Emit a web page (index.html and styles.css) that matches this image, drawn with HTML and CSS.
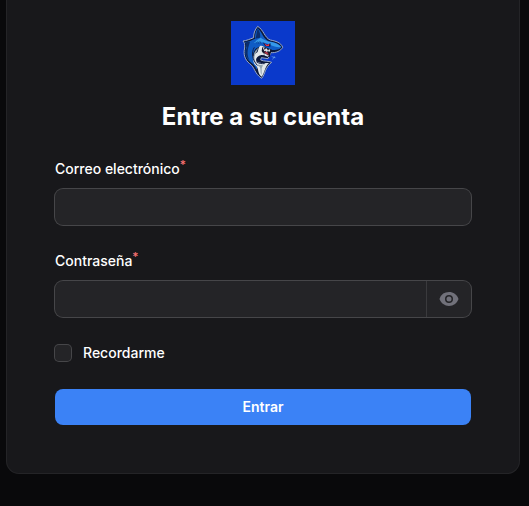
FILE: index.html
```html
<!DOCTYPE html>
<html lang="es">
<head>
<meta charset="utf-8">
<meta name="viewport" content="width=device-width, initial-scale=1">
<title>Entre a su cuenta</title>
<link rel="stylesheet" href="styles.css">
</head>
<body>
<main class="card">
  <header class="header">
    <svg class="logo" viewBox="12 12 192 192" aria-hidden="true">
      <path fill="#0a39cb" d="M12 12h192v192H12z"/>
      <path fill="#0a173a" stroke="#9aaacb" stroke-width="3" stroke-linejoin="round" d="M92 28C83 38 79 52 80 62C69 66 59 71 48 72C54 79 53 85 53 93C48 112 54 129 68 140C84 151 81 169 104 184C115 171 113 152 134 136C124 131 112 134 101 129L103 122L123 125L132 107C147 108 161 102 167 91C162 76 145 72 130 69C113 63 110 38 92 28Z"/>
      <path fill="#105cc5" d="M92 34C86 43 83 55 84 65C76 69 64 75 53 75C58 80 60 84 58 91C52 107 56 124 70 135C80 143 86 148 88 158L93 148C80 137 74 117 81 103C85 94 95 88 108 88L136 99C149 100 161 96 163 90C157 81 143 76 128 73C108 68 107 47 92 34Z"/>
      <path fill="#0a2d6d" d="M92 35C88 46 89 55 85 65L99 62C101 50 97 41 92 35ZM55 76L69 74L64 91C60 106 61 119 68 131C53 118 54 102 60 91Z"/>
      <path fill="#3599e9" d="M101 62C110 68 122 74 136 76C148 79 158 84 162 90C151 92 140 88 129 83C117 77 106 74 91 76L80 78L90 69Z"/>
      <path fill="#e2e8eb" d="M99 87C104 84 110 88 115 92L107 93L109 105L116 115L103 114C93 116 87 122 87 130C91 139 106 139 126 138C113 150 113 168 104 179C91 170 96 154 87 146C76 139 76 117 86 109C97 105 91 94 99 87Z"/>
      <path fill="#91a3b1" d="M94 92L89 105C82 114 80 124 86 136C92 144 99 144 108 145L104 154L104 174C98 166 103 156 98 149L89 144L95 144C76 133 77 110 87 99Z"/>
      <path fill="none" stroke="#12204a" stroke-width="3" d="M82 91C72 107 76 129 91 145M88 134C97 141 106 140 113 140"/>
      <path fill="#11152a" d="M106 90L133 98L128 121L112 114L104 102Z"/>
      <path fill="#a83345" d="M112 105C118 101 124 106 125 114L116 111Z"/>
      <path fill="#e4e9ee" d="M107 91L111 92L113 99L117 94L120 95L123 101L126 97L130 98L127 105L123 102L119 105L116 101L112 103ZM108 107L111 108L114 112L117 110L120 115L125 114L123 119L114 116Z"/>
      <path fill="#081c50" d="M107 76L119 83L131 79L130 89L115 88Z"/>
      <path fill="#f32b35" d="M112 79L120 84L127 80L126 87L117 87Z"/>
      <path fill="none" stroke="#0a3f87" stroke-width="2" d="M86 75l5 5m1-7l4 8m2-9l4 8"/>
      <path fill="none" stroke="#8fc8f4" stroke-width="2" d="M135 118l3 3m4-3l-3 3l6 1m-6 2l-2 3"/>
    </svg>
    <h1 class="title">Entre a su cuenta</h1>
  </header>
  <form class="form">
    <div class="field">
      <label class="label" for="email">Correo electrónico<sup class="required">*</sup></label>
      <div class="control"><input class="input" id="email" type="email" required></div>
    </div>
    <div class="field">
      <label class="label" for="password">Contraseña<sup class="required">*</sup></label>
      <div class="control">
        <input class="input" id="password" type="password" required>
        <button class="reveal" type="button" aria-label="Mostrar contraseña">
          <svg class="eye" viewBox="0 0 20 20" aria-hidden="true">
            <path d="M10 12.5a2.5 2.5 0 1 0 0-5 2.5 2.5 0 0 0 0 5Z"/>
            <path fill-rule="evenodd" d="M.664 10.59a1.651 1.651 0 0 1 0-1.186A10.004 10.004 0 0 1 10 3c4.257 0 7.893 2.66 9.336 6.41.147.381.146.804 0 1.186A10.004 10.004 0 0 1 10 17c-4.257 0-7.893-2.66-9.336-6.41ZM14 10a4 4 0 1 1-8 0 4 4 0 0 1 8 0Z" clip-rule="evenodd"/>
          </svg>
        </button>
      </div>
    </div>
    <label class="remember"><input class="checkbox" type="checkbox">Recordarme</label>
    <button class="submit" type="submit">Entrar</button>
  </form>
</main>
</body>
</html>
```
FILE: styles.css
```css
* {
  box-sizing: border-box;
}

body {
  margin: 0;
  padding: 0 10px 32px 7px;
  background: #09090b;
  color: #fff;
  font-family: Inter, "Liberation Sans", sans-serif;
  font-size: 14px;
  line-height: 24px;
}

.card {
  max-width: 512px;
  margin: 0 auto;
  padding: 21px 48px 48px;
  border-radius: 0 0 12px 12px;
  background: #18181b;
  box-shadow: 0 0 0 1px #242427;
}

.header {
  display: flex;
  flex-direction: column;
  align-items: center;
  gap: 16px;
  margin-bottom: 24px;
}

.logo {
  width: 64px;
  height: 64px;
}

.title {
  margin: 0;
  font-size: 24px;
  font-weight: 700;
  line-height: 32px;
}

.form {
  display: grid;
  gap: 24px;
}

.field {
  display: grid;
  gap: 8px;
}

.label,
.remember {
  font-weight: 500;
}

.label {
  justify-self: start;
}

.required {
  color: #f87171;
  font-size: 12px;
  line-height: 0;
  vertical-align: 5px;
}

.control {
  display: flex;
  height: 36px;
  border-radius: 8px;
  background: #242427;
  box-shadow: 0 0 0 1px #464649;
}

.input {
  flex: 1;
  min-width: 0;
  padding: 6px 12px;
  border: 0;
  outline: 0;
  background: transparent;
  color: #fff;
  font: inherit;
}

.reveal {
  display: flex;
  align-items: center;
  padding: 0 12px;
  border: 0;
  border-left: 1px solid #3a3a3d;
  background: transparent;
  color: #71717a;
}

.eye {
  width: 20px;
  height: 20px;
  fill: currentColor;
}

.remember {
  display: flex;
  align-items: center;
  justify-self: start;
  gap: 12px;
}

.checkbox {
  appearance: none;
  width: 16px;
  height: 16px;
  margin: 0;
  border-radius: 4px;
  background: #242427;
  box-shadow: 0 0 0 1px #464649;
}

.submit {
  height: 36px;
  padding: 0 12px;
  border: 0;
  border-radius: 8px;
  background: #3b82f6;
  color: #fff;
  font: inherit;
  font-weight: 600;
}
```
